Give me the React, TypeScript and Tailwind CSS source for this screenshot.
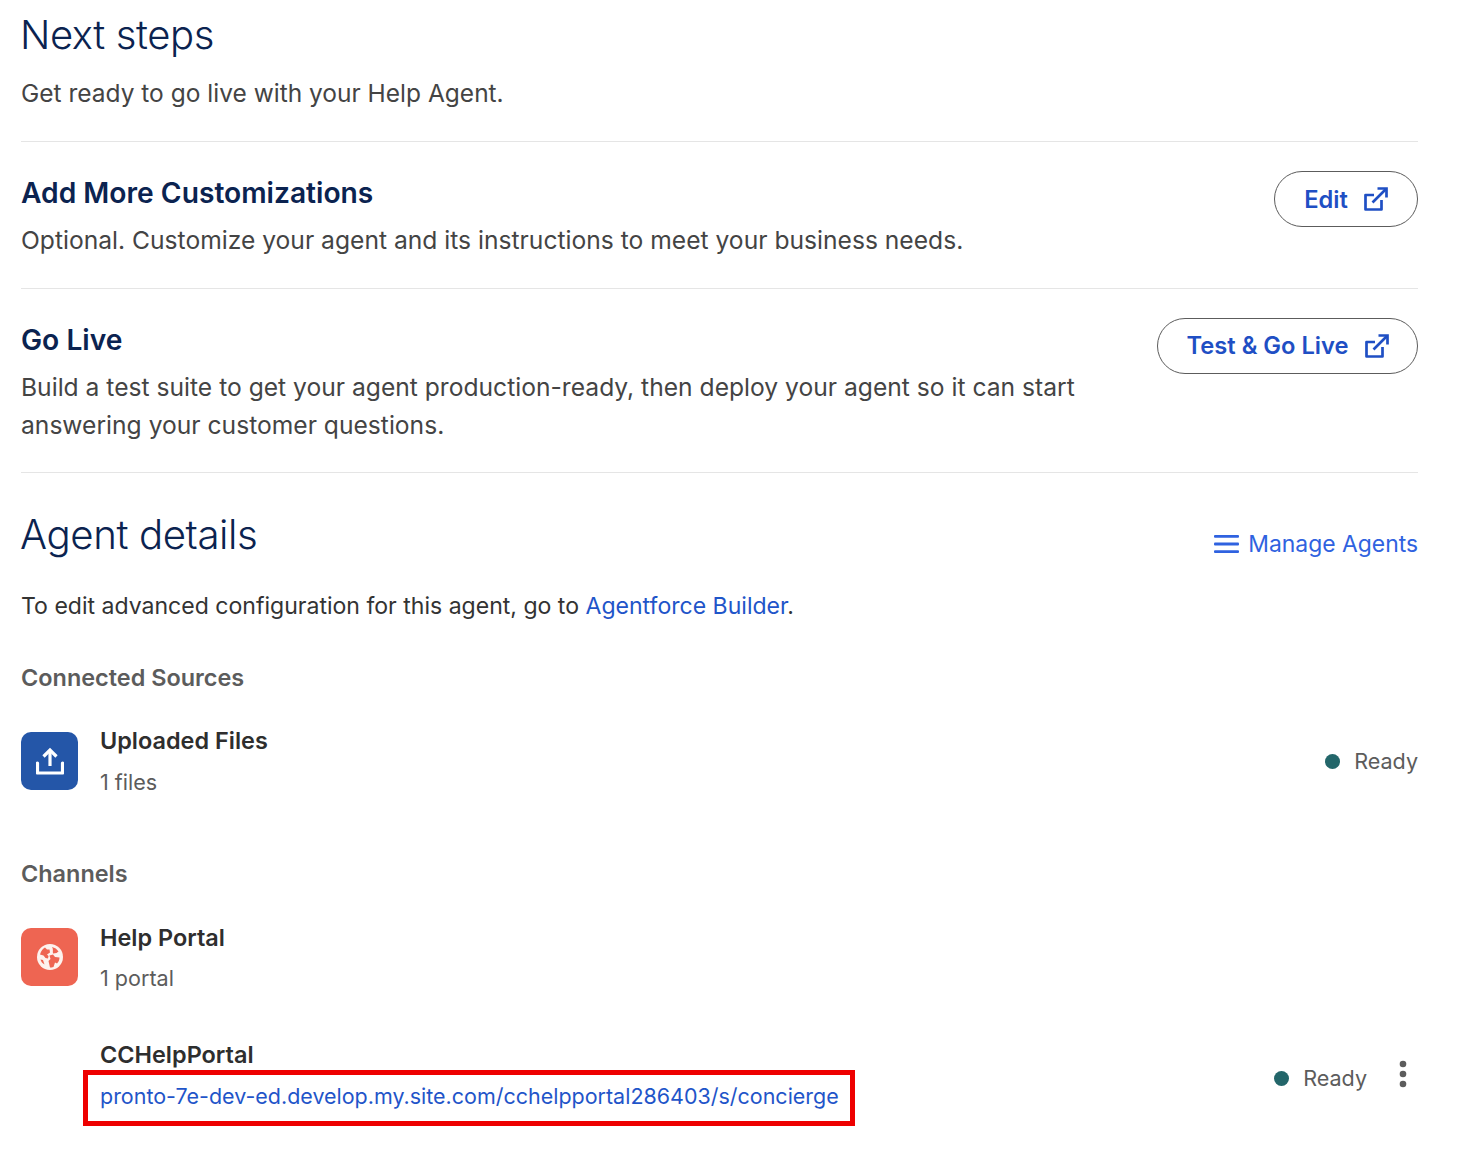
import React from "react";

const ExternalIcon = () => (
  <svg width="24" height="24" viewBox="0 0 24 24" fill="none" stroke="#1f4fc4" strokeWidth="2.7" className="shrink-0">
    <path d="M10 8H1.5V22.5H17.5V13" strokeLinejoin="round" />
    <path d="M8.5 15.5L22 2" />
    <path d="M13.5 1.5H22.5V10.5" />
  </svg>
);

const Ready = () => (
  <div className="flex items-center gap-[14px]">
    <span className="w-[15px] h-[15px] rounded-full bg-[#23666a]" />
    <span className="text-[21.56px] leading-[30px] text-[#5c5c5c]">Ready</span>
  </div>
);

const Divider = () => <div className="h-px bg-[#e5e5e5]" />;

export default function App() {
  return (
    <div className="w-[1458px] h-[1168px] bg-white overflow-hidden pl-[21px] pr-[40px] font-['Inter',sans-serif]">
      <h1 className="pt-[9px] -ml-[1px] text-[40px] leading-[52px] font-[350] tracking-[-0.4px] text-[#0b2350]">Next steps</h1>
      <p className="mt-[13px] text-[24.5px] leading-[38px] text-[#444444]">Get ready to go live with your Help Agent.</p>
      <div className="mt-[29px]"><Divider /></div>

      <div className="flex justify-between items-start h-[146px] pt-[29px]">
        <div>
          <h2 className="text-[28.2px] leading-[46px] -mt-[1px] font-semibold text-[#0b2350]">Add More Customizations</h2>
          <p className="text-[24.64px] leading-[38px] mt-[5px] text-[#444444]">Optional. Customize your agent and its instructions to meet your business needs.</p>
        </div>
        <button className="flex items-center gap-[16px] h-[56px] w-[144px] justify-center rounded-full border border-[#5c5c5c] text-[23.7px] font-semibold text-[#1f4fc4]">
          <span className="mt-[1px]">Edit</span> <ExternalIcon />
        </button>
      </div>
      <Divider />

      <div className="flex justify-between items-start h-[183px] pt-[29px]">
        <div className="w-[1090px]">
          <h2 className="text-[28.2px] leading-[46px] -mt-[1px] font-semibold text-[#0b2350]">Go Live</h2>
          <p className="text-[24.64px] leading-[38px] mt-[5px] text-[#444444]">Build a test suite to get your agent production-ready, then deploy your agent so it can start answering your customer questions.</p>
        </div>
        <button className="flex items-center gap-[16px] h-[56px] w-[261px] justify-center rounded-full border border-[#5c5c5c] text-[23.7px] font-semibold text-[#1f4fc4]">
          <span>Test &amp; Go Live</span> <ExternalIcon />
        </button>
      </div>
      <Divider />

      <div className="flex justify-between items-center mt-[36px] h-[52px]">
        <h1 className="-ml-[1px] text-[40.2px] leading-[52px] font-[350] tracking-[-0.4px] text-[#0b2350]">Agent details</h1>
        <div className="flex items-center gap-[9px] mt-[18px]">
          <svg width="25" height="18" viewBox="0 0 25 18" fill="#2f62e0">
            <rect x="0" y="0" width="25" height="2.8" rx="1" />
            <rect x="0" y="7.6" width="25" height="2.8" rx="1" />
            <rect x="0" y="15.2" width="25" height="2.8" rx="1" />
          </svg>
          <span className="text-[22.9px] leading-[30px] text-[#2f62e0]">Manage Agents</span>
        </div>
      </div>

      <p className="mt-[27px] text-[23.05px] leading-[36px] text-[#333333]">
        To edit advanced configuration for this agent, go to <span className="text-[#1f55c9]">Agentforce Builder</span>.
      </p>

      <h3 className="mt-[39px] text-[23.45px] leading-[30px] font-semibold text-[#5c5c5c]">Connected Sources</h3>

      <div className="flex justify-between items-start mt-[33px]">
        <div className="flex gap-[22px]">
          <div className="w-[57px] h-[58px] mt-[6px] rounded-[10px] bg-[#2456a8] flex items-center justify-center">
            <svg width="28" height="28" viewBox="0 0 28 28" fill="none" stroke="white" strokeWidth="3.2">
              <path d="M14 19V3" />
              <path d="M7.5 9.5L14 3L20.5 9.5" />
              <path d="M1.5 16V26H26.5V16" strokeLinejoin="round" strokeLinecap="round" />
            </svg>
          </div>
          <div>
            <div className="text-[23.45px] leading-[30px] font-semibold text-[#2e2e2e]">Uploaded Files</div>
            <div className="mt-[11px] text-[21.56px] leading-[30px] text-[#5c5c5c]">1 files</div>
          </div>
        </div>
        <div className="mt-[20px]"><Ready /></div>
      </div>

      <h3 className="mt-[62px] text-[23.45px] leading-[30px] font-semibold text-[#5c5c5c]">Channels</h3>

      <div className="flex gap-[22px] mt-[34px]">
        <div className="w-[57px] h-[58px] mt-[5px] rounded-[10px] bg-[#ee6552] flex items-center justify-center">
          <svg width="28" height="28" viewBox="0 0 28 28">
            <circle cx="14" cy="14" r="13" fill="#fdf2ee" />
            <path d="M9 4.5C7 5.5 5 8 4 11.5L7.5 12.5L9.5 15L12 15.5L12.5 13L11 11.5L14 9.5L13.5 6.5L11 6.5Z" fill="#ee6552" />
            <path d="M16 4C17.5 6 16.5 8.5 17 10.5L20.5 10L22.5 8.5C21 6.2 18.8 4.6 16 4Z" fill="#ee6552" />
            <path d="M13.5 12.5L17 11.5L19 14L23.5 14.5C23.5 17 22.5 19 21 20.5L19 19.5L17.5 24C16 24.5 15 24.5 14 24.5L12.5 18L14.5 16Z" fill="#ee6552" />
            <path d="M4.5 16.5L7 17L8.5 21.5C6.5 20.5 5 18.5 4.5 16.5Z" fill="#ee6552" />
          </svg>
        </div>
        <div>
          <div className="text-[23.45px] leading-[30px] font-semibold text-[#2e2e2e]">Help Portal</div>
          <div className="mt-[10px] text-[21.56px] leading-[30px] text-[#5c5c5c]">1 portal</div>
        </div>
      </div>

      <div className="flex justify-between items-start mt-[47px] pl-[79px]">
        <div className="relative">
          <div className="text-[23.45px] leading-[30px] font-semibold text-[#2e2e2e]">CCHelpPortal</div>
          <div className="mt-[11px] text-[21.47px] leading-[30px] text-[#1f55c9]">pronto-7e-dev-ed.develop.my.site.com/cchelpportal286403/s/concierge</div>
          <div className="absolute left-[-17px] top-[30px] w-[772px] h-[56px] border-[5px] border-[#ee0000]" />
        </div>
        <div className="flex items-center gap-[31px] mt-[23px]">
          <Ready />
          <svg width="10" height="30" viewBox="0 0 10 30" fill="#5c5c5c" className="-mt-[8px] mr-[10px]">
            <circle cx="5" cy="5" r="3.3" />
            <circle cx="5" cy="15" r="3.3" />
            <circle cx="5" cy="25" r="3.3" />
          </svg>
        </div>
      </div>
    </div>
  );
}
